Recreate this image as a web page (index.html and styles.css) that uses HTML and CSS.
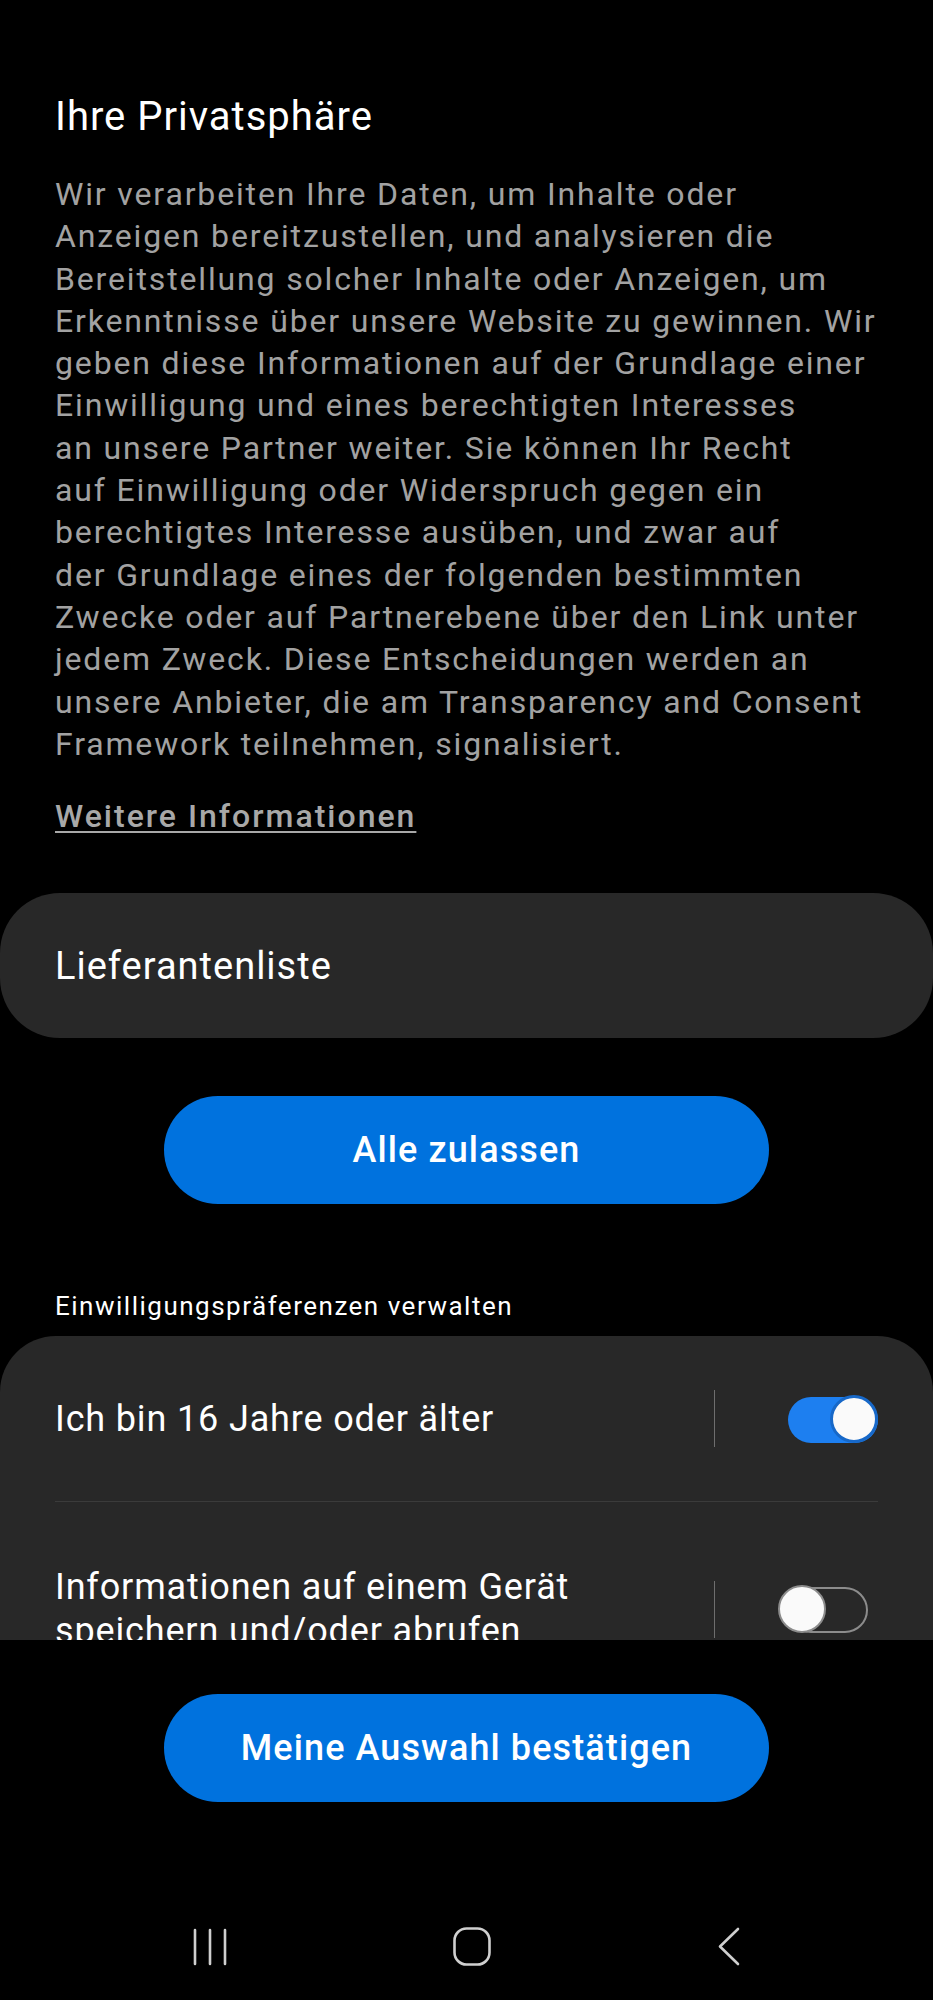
FILE: index.html
```html
<!DOCTYPE html>
<html lang="de">
<head>
  <meta charset="UTF-8">
  <title>Ihre Privatsphäre</title>
  <meta name="viewport" content="width=device-width, initial-scale=1.0" />
  <link rel="stylesheet" href="styles.css">
</head>
<body>
  <div class="screen">
    <div class="scroll-area">
      <div class="intro">
        <h1 class="title">Ihre Privatsphäre</h1>
        <p class="description">Wir verarbeiten Ihre Daten, um Inhalte oder<br>
          Anzeigen bereitzustellen, und analysieren die<br>
          Bereitstellung solcher Inhalte oder Anzeigen, um<br>
          Erkenntnisse über unsere Website zu gewinnen. Wir<br>
          geben diese Informationen auf der Grundlage einer<br>
          Einwilligung und eines berechtigten Interesses<br>
          an unsere Partner weiter. Sie können Ihr Recht<br>
          auf Einwilligung oder Widerspruch gegen ein<br>
          berechtigtes Interesse ausüben, und zwar auf<br>
          der Grundlage eines der folgenden bestimmten<br>
          Zwecke oder auf Partnerebene über den Link unter<br>
          jedem Zweck. Diese Entscheidungen werden an<br>
          unsere Anbieter, die am Transparency and Consent<br>
          Framework teilnehmen, signalisiert.</p>
        <a class="more-link" href="#">Weitere Informationen</a>
      </div>

      <div class="vendor-card">Lieferantenliste</div>

      <div class="btn-row">
        <button class="primary-btn">Alle zulassen</button>
      </div>

      <div class="section-label">Einwilligungspräferenzen verwalten</div>

      <div class="consent-card">
        <div class="consent-row">
          <div class="consent-text">Ich bin 16 Jahre oder älter</div>
          <span class="row-divider"></span>
          <span class="switch on"><span class="track"></span><span class="thumb"></span></span>
        </div>
        <div class="consent-row">
          <div class="consent-text">Informationen auf einem Gerät speichern und/oder abrufen</div>
          <span class="row-divider"></span>
          <span class="switch"><span class="track"></span><span class="thumb"></span></span>
        </div>
      </div>
    </div>

    <div class="bottom-area">
      <div class="btn-row">
        <button class="primary-btn">Meine Auswahl bestätigen</button>
      </div>
      <div class="nav-bar">
        <svg class="nav-icon" width="34" height="38" viewBox="0 0 34 38">
          <path d="M2 2 V36 M17 2 V36 M32 2 V36" stroke="#cfcfcf" stroke-width="2.6" stroke-linecap="round" fill="none"/>
        </svg>
        <svg class="nav-icon" width="38" height="39" viewBox="0 0 38 39">
          <rect x="1.5" y="1.5" width="35" height="36" rx="12" stroke="#cfcfcf" stroke-width="2.6" fill="none"/>
        </svg>
        <svg class="nav-icon" width="24" height="39" viewBox="0 0 24 39">
          <path d="M21 2 L3 19.5 L21 37" stroke="#cfcfcf" stroke-width="2.6" stroke-linecap="round" stroke-linejoin="round" fill="none"/>
        </svg>
      </div>
    </div>
  </div>
</body>
</html>
```

FILE: styles.css
```css
body {
  margin: 0;
  background: #000;
  font-family: Roboto, "Noto Sans", sans-serif;
  color: #fff;
}

.screen {
  width: 933px;
  height: 2000px;
  display: flex;
  flex-direction: column;
}

.scroll-area {
  height: 1640px;
  overflow: hidden;
}

.intro {
  padding: 93px 55px 0;
}

.title {
  margin: 0;
  font-size: 40px;
  line-height: 48px;
  font-weight: 400;
  letter-spacing: 1px;
  color: #fff;
}

.description {
  margin: 32px 0 0;
  font-size: 32px;
  line-height: 42.3px;
  letter-spacing: 1.85px;
  color: #a2a2a2;
}

.more-link {
  display: inline-block;
  margin-top: 30px;
  font-size: 32px;
  line-height: 42px;
  font-weight: 500;
  letter-spacing: 2px;
  color: #a8a8a8;
  text-decoration: underline;
  text-underline-offset: 4px;
  text-decoration-thickness: 2px;
}

.vendor-card {
  margin-top: 56px;
  height: 145px;
  display: flex;
  align-items: center;
  padding: 0 55px;
  background: #282828;
  border-radius: 60px;
  font-size: 38px;
  letter-spacing: 1px;
}

.btn-row {
  display: flex;
  justify-content: center;
}

.vendor-card + .btn-row {
  margin-top: 58px;
}

.primary-btn {
  width: 605px;
  height: 108px;
  border: none;
  border-radius: 54px;
  background: #0072de;
  color: #fff;
  font-family: Roboto, "Noto Sans", sans-serif;
  font-size: 36px;
  font-weight: 500;
  letter-spacing: 1.1px;
}

.section-label {
  margin-top: 85px;
  padding: 0 55px;
  font-size: 26px;
  line-height: 34px;
  letter-spacing: 1.5px;
}

.consent-card {
  margin-top: 13px;
  background: #282828;
  border-radius: 56px 56px 0 0;
  padding-bottom: 40px;
}

.consent-row {
  margin: 0 55px;
  padding: 54px 0;
  display: flex;
  align-items: center;
}

.consent-row + .consent-row {
  padding-top: 63px;
  border-top: 1px solid #3b3b3b;
}

.consent-text {
  flex: 1;
  margin-right: 75px;
  font-size: 36px;
  line-height: 44px;
  letter-spacing: 0.85px;
}

.row-divider {
  width: 1.5px;
  height: 57px;
  background: #6e6e6e;
  margin-right: 63px;
}

.switch {
  position: relative;
  width: 100px;
  height: 50px;
}

.switch .track {
  position: absolute;
  top: 3px;
  right: 10px;
  width: 80px;
  height: 46px;
  box-sizing: border-box;
  border-radius: 23px;
  border: 2.5px solid #8c8c8c;
}

.switch .thumb {
  position: absolute;
  top: 1px;
  left: 0;
  width: 48px;
  height: 48px;
  box-sizing: border-box;
  border-radius: 50%;
  background: #fafafa;
  border: 2px solid #8c8c8c;
}

.switch.on .track {
  right: 0;
  width: 90px;
  border: none;
  background: #1d7ff0;
}

.switch.on .thumb {
  left: auto;
  right: 0;
  border: 3px solid #1768c8;
}

.bottom-area {
  flex: 1;
  padding-top: 54px;
}

.nav-bar {
  margin-top: 125px;
  display: flex;
  justify-content: center;
  align-items: center;
  gap: 226px;
}
```
